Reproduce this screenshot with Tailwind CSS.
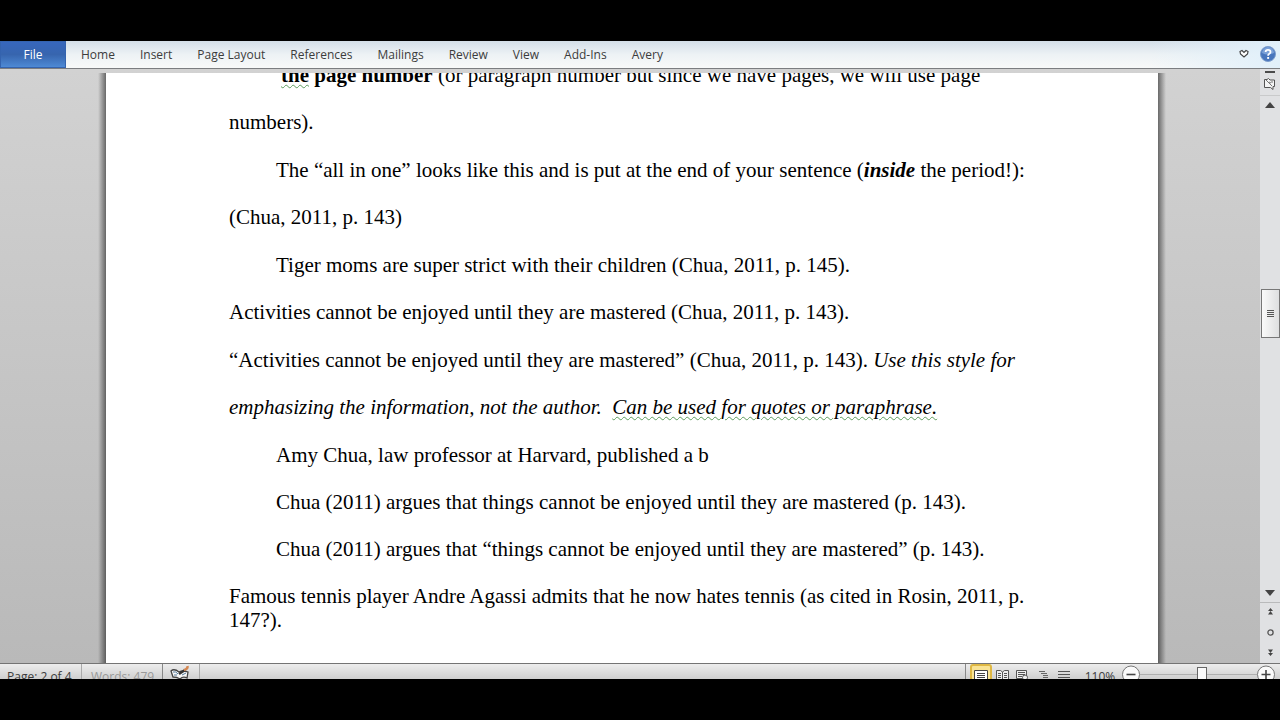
<!DOCTYPE html>
<html lang="en">
<head>
  <meta charset="UTF-8">
  <meta name="viewport" content="width=device-width, initial-scale=1.0">
  <title>Word document</title>
  <script src="https://cdn.jsdelivr.net/npm/@tailwindcss/browser@4"></script>
</head>
<body class="h-screen bg-black py-[41px] flex flex-col overflow-hidden font-['Open_Sans','Noto_Sans',sans-serif] text-[12px] text-[#3c3c3c]">

  <!-- ribbon tabs -->
  <header class="h-7 shrink-0 flex items-stretch border-b border-[#7b7d80] bg-linear-to-b from-[#d3dee8] via-[#edf2f5] to-[#f8f9f9]">
    <button class="w-[66px] shrink-0 border border-[#3463ae] bg-linear-to-b from-[#3767bd] via-[#3765ae] to-[#4e8ad5] text-white">File</button>
    <nav class="flex items-stretch pl-[2px]">
      <button class="pl-[13px] pr-3">Home</button>
      <button class="pl-[13px] pr-3">Insert</button>
      <button class="pl-[13px] pr-3">Page Layout</button>
      <button class="pl-[13px] pr-3">References</button>
      <button class="pl-[13px] pr-3">Mailings</button>
      <button class="pl-[13px] pr-3">Review</button>
      <button class="pl-[13px] pr-3">View</button>
      <button class="pl-[13px] pr-3">Add-Ins</button>
      <button class="pl-[13px] pr-3">Avery</button>
    </nav>
    <div class="ml-auto w-[130px] flex items-center justify-end gap-[10px] pr-1 pb-[2px] bg-linear-to-r from-[#e1f0fa]/0 to-[#e1f0fa]">
      <button aria-label="Minimize the Ribbon">
        <svg class="block" width="12" height="12" viewBox="0 0 12 12" fill="#fff" stroke="#444" stroke-width="1.2"><path d="M2 3.500 L4 2.500 L6 4.500 L8 2.500 L10 3.500 L9.500 6 L6 9 L2.500 6 Z"/></svg>
      </button>
      <button aria-label="Help">
        <svg class="block" width="16" height="16" viewBox="0 0 16 16">
          <circle cx="8" cy="8" r="7.500" fill="#4876bd" stroke="#7c9dcc"/>
          <path d="M2 7 A6 6 0 0 1 14 7 Q8 10 2 7Z" fill="#7ba1d8"/>
          <path d="M5.600 6 Q5.600 3.800 8 3.800 Q10.500 3.800 10.500 6 Q10.500 7.200 9 8 Q8.100 8.500 8.100 9.800" fill="none" stroke="#fff" stroke-width="1.800"/>
          <rect x="7.200" y="11" width="1.900" height="1.900" fill="#fff"/>
        </svg>
      </button>
    </div>
  </header>

  <div class="flex-1 min-h-0 flex">
    <!-- document area -->
    <main class="flex-1 min-w-0 flex flex-col bg-linear-to-b from-[#d2d2d2] to-[#b9b9b9] pt-1">
      <div class="flex-1 min-h-0 overflow-hidden flex justify-center pl-1">
        <div class="w-2 -ml-2 shrink-0 bg-linear-to-r from-black/0 to-black/50"></div>
        <article class="w-[1052px] min-w-0 bg-white overflow-hidden px-[123px] font-['Liberation_Serif',serif] text-[21px] leading-[47px] text-black whitespace-nowrap">
          <div class="-mt-[21px]">
            <p class="indent-[52px] mb-px"><b><span class="underline decoration-wavy decoration-[#5d9b5d] decoration-1 underline-offset-2">the</span> page number</b> (or paragraph number but since we have pages, we will use page<br>numbers).</p>
            <p class="indent-[47px] mb-px">The “all in one” looks like this and is put at the end of your sentence (<b><i>inside</i></b> the period!):<br>(Chua, 2011, p. 143)</p>
            <p class="indent-[47px]">Tiger moms are super strict with their children (Chua, 2011, p. 145).</p>
            <p class="mb-px">Activities cannot be enjoyed until they are mastered (Chua, 2011, p. 143).</p>
            <p class="mb-px">“Activities cannot be enjoyed until they are mastered” (Chua, 2011, p. 143). <i>Use this style for<br>emphasizing the information, not the author.&nbsp; <span class="underline decoration-wavy decoration-[#5d9b5d] decoration-1 underline-offset-2">Can be used for quotes or paraphrase.</span></i></p>
            <p class="indent-[47px]">Amy Chua, law professor at Harvard, published a b</p>
            <p class="indent-[47px]">Chua (2011) argues that things cannot be enjoyed until they are mastered (p. 143).</p>
            <p class="indent-[47px]">Chua (2011) argues that “things cannot be enjoyed until they are mastered” (p. 143).</p>
            <p class="leading-6 pt-[11px]">Famous tennis player Andre Agassi admits that he now hates tennis (as cited in Rosin, 2011, p.<br>147?).</p>
          </div>
        </article>
        <div class="w-2 -mr-2 shrink-0 bg-linear-to-r from-black/50 to-black/0"></div>
      </div>
    </main>

    <!-- vertical scrollbar -->
    <aside class="w-5 shrink-0 flex flex-col items-center bg-[#e0e1e3]">
      <div class="w-full h-[27px] flex flex-col items-center gap-[5px] pt-[2px] border-b border-[#c9cacb]">
        <div class="w-[10px] h-[2px] shrink-0 bg-[#4b4b4b]"></div>
        <button aria-label="View Ruler">
          <svg class="block" width="12" height="12" viewBox="0 0 12 12" fill="#f4f4f4" stroke="#555"><path d="M.5 1.500 H3 L4.500 .5 L6 2 H10.500 V8.500 H9 V11.500 L6.500 9.500 H.5 Z"/><path d="M2 2 L8 8 M5 4 L7 5 M8 3 V5" stroke-width=".8"/></svg>
        </button>
      </div>
      <button class="mt-[6px]" aria-label="Scroll up">
        <svg class="block" width="10" height="6" viewBox="0 0 10 6" fill="#444"><path d="M0 6 L5 0 L10 6Z"/></svg>
      </button>
      <div class="w-full flex-[181] min-h-0"></div>
      <button class="w-[19px] h-[49px] shrink-0 flex flex-col items-center justify-center gap-px border border-[#777] bg-linear-to-r from-[#fafafa] to-[#dedfe0]" aria-label="Scroll thumb">
        <span class="w-[7px] h-px bg-[#555]"></span>
        <span class="w-[7px] h-px bg-[#555]"></span>
        <span class="w-[7px] h-px bg-[#555]"></span>
        <span class="w-[7px] h-px bg-[#555]"></span>
      </button>
      <div class="w-full flex-[253] min-h-0"></div>
      <button class="w-full h-[13px] shrink-0 flex justify-center border-b border-[#b9babb]" aria-label="Scroll down">
        <svg class="block" width="10" height="6" viewBox="0 0 10 6" fill="#444"><path d="M0 0 H10 L5 6Z"/></svg>
      </button>
      <div class="w-full h-[60px] shrink-0 flex flex-col items-center justify-between pt-[5px] pb-[7px]">
        <button aria-label="Previous page">
          <svg class="block" width="7" height="7" viewBox="0 0 7 7" fill="#444"><path d="M3.500 0 L6 3 H1Z M3.500 3 L6 6.500 H1Z"/></svg>
        </button>
        <button aria-label="Select browse object">
          <svg class="block" width="7" height="7" viewBox="0 0 7 7" fill="none" stroke="#555" stroke-width="1.300"><circle cx="3.500" cy="3.500" r="2.600"/></svg>
        </button>
        <button aria-label="Next page">
          <svg class="block" width="7" height="7" viewBox="0 0 7 7" fill="#444"><path d="M1 .5 H6 L3.500 4Z M1 4 H6 L3.500 7Z"/></svg>
        </button>
      </div>
    </aside>
  </div>

  <!-- status bar -->
  <footer class="h-4 shrink-0 overflow-hidden border-t border-[#747474] bg-linear-to-b from-[#ededed] to-[#cfcfcf]">
    <div class="h-[26px] flex items-stretch">
      <span class="w-[82px] pl-[7px] border-r border-[#aaa] leading-[26px]">Page: 2 of 4</span>
      <span class="w-[81px] pl-[9px] border-r border-[#888] leading-[26px] text-[#999]">Words: 479</span>
      <button class="w-[37px] pl-[7px] flex items-start border-r border-[#aaa]" aria-label="Proofing">
        <svg class="block" width="20" height="20" viewBox="0 0 20 20">
          <path d="M1 7 Q4 4 9 8 Q13 6 18 8 L17 14 Q13 12 10 15 Q7 13 3 13Z" fill="#f7f7f7" stroke="#444" stroke-width="1.300"/>
          <path d="M3 8 Q6 7 8 10 M12 11 L16 9 M4 11 H7" fill="none" stroke="#547b9b"/>
          <path d="M9 10 L15 6" stroke="#333" stroke-width="2.500"/>
          <path d="M14 6 Q18 5 17.500 2" fill="none" stroke="#d48752" stroke-width="2.500"/>
        </svg>
      </button>
      <div class="ml-auto flex items-start border-l border-[#888] pl-1 pr-[5px]">
        <button class="w-[22px] h-[22px] flex items-start justify-center pt-[4px] border-2 border-[#dfb844] rounded-[3px] bg-[#f9e394]" aria-label="Print Layout">
          <svg class="block" width="14" height="14" viewBox="0 0 14 14" fill="#fff" stroke="#444"><path d="M.5 .5 H13.500 V13.500 H.5Z M3 3.500 H11 M3 5.500 H11 M3 7.500 H11 M3 9.500 H11"/></svg>
        </button>
        <button class="w-5 pt-[6px] flex justify-center" aria-label="Full Screen Reading">
          <svg class="block" width="13" height="14" viewBox="0 0 13 14" fill="#eee" stroke="#555"><path d="M.5 .5 H4.500 L6.500 2 L8.500 .5 H12.500 V10.500 H8 L6.500 12 L5 10.500 H.5Z M6.500 2 V12 M2 3.500 H5 M2 5.500 H5 M2 7.500 H5 M8 3.500 H11 M8 5.500 H11 M8 7.500 H11"/></svg>
        </button>
        <button class="w-5 pt-[6px] flex justify-center" aria-label="Web Layout">
          <svg class="block" width="13" height="14" viewBox="0 0 13 14" fill="#eee" stroke="#555"><path d="M.5 .5 H10.500 V8.500 H.5Z M2 2.500 H9 M2 4.500 H9 M2 6.500 H6"/><circle cx="9" cy="7.500" r="2.500"/></svg>
        </button>
        <button class="w-[22px] pt-[6px] flex justify-center" aria-label="Outline">
          <svg class="block" width="11" height="14" viewBox="0 0 11 14" fill="none" stroke="#666"><path d="M1 1.500 H7 M3 3.500 H9 M5 5.500 H10 M5 7.500 H10"/></svg>
        </button>
        <button class="w-5 pt-[6px] flex justify-center" aria-label="Draft">
          <svg class="block" width="12" height="14" viewBox="0 0 12 14" fill="none" stroke="#555"><path d="M0 1.500 H12 M0 4.500 H12 M0 7.500 H12"/></svg>
        </button>
        <button class="w-12 pl-1 leading-[26px]">110%</button>
        <button class="pt-px" aria-label="Zoom out">
          <svg class="block" width="18" height="20" viewBox="0 0 18 20" fill="#fafafa" stroke="#777"><circle cx="9" cy="9.500" r="8.500"/><path d="M4.500 9.500 H13.500" stroke="#444" stroke-width="1.600"/></svg>
        </button>
        <input type="range" min="0" max="100" value="53" aria-label="Zoom level" class="w-[117px] h-5 appearance-none bg-linear-to-b from-transparent from-50% via-[#888] via-50% to-transparent to-55% [&::-webkit-slider-thumb]:appearance-none [&::-webkit-slider-thumb]:w-[10px] [&::-webkit-slider-thumb]:h-[14px] [&::-webkit-slider-thumb]:border [&::-webkit-slider-thumb]:border-[#666] [&::-webkit-slider-thumb]:bg-[#fafafa]">
        <button class="pt-px" aria-label="Zoom in">
          <svg class="block" width="18" height="20" viewBox="0 0 18 20" fill="#fafafa" stroke="#777"><circle cx="9" cy="9.500" r="8.500"/><path d="M4.500 9.500 H13.500 M9 5 V14" stroke="#444" stroke-width="1.600"/></svg>
        </button>
      </div>
    </div>
  </footer>
</body>
</html>
